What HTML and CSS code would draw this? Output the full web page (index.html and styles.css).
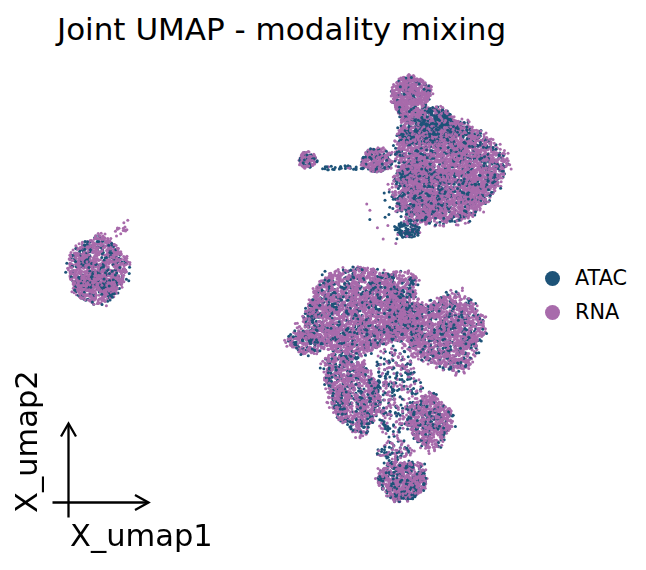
FILE: index.html
```html
<!DOCTYPE html>
<html>
<head>
<meta charset="utf-8">
<link rel="stylesheet" href="styles.css">
</head>
<body>
<div class="figure">
  <h1 class="title">Joint UMAP - modality mixing</h1>
  <div class="main">
    <div class="plot">
      <canvas id="scatter" class="scatter" width="530" height="508"></canvas>
      <svg class="axes" viewBox="0 62 530 508" width="530" height="508">
        <path class="axis" d="M68.5 517.5 V424"/>
        <path class="axis" d="M61 436.5 L68.5 423.5 L76 436.5"/>
        <path class="axis" d="M52.5 502.5 H148"/>
        <path class="axis" d="M135 495 L148.5 502.5 L135 510"/>
      </svg>
      <div class="xlabel">X_umap1</div>
      <div class="ylabel">X_umap2</div>
    </div>
    <ul class="legend">
      <li class="legend-item"><span class="dot atac"></span>ATAC</li>
      <li class="legend-item"><span class="dot rna"></span>RNA</li>
    </ul>
  </div>
</div>
<script src="script.js"></script>
</body>
</html>
```

FILE: styles.css
```css
* { box-sizing: border-box; }
html, body { margin: 0; padding: 0; background: #ffffff; }
body { font-family: "DejaVu Sans", "Liberation Sans", sans-serif; color: #000; }
.figure { width: 646px; height: 570px; overflow: hidden; display: flex; flex-direction: column; }
.title { margin: 0; height: 62px; padding: 14px 0 0 57px; font-size: 31px; line-height: 31px; font-weight: normal; white-space: nowrap; }
.main { display: flex; flex: 1; }
.plot { position: relative; width: 530px; height: 508px; flex: none; }
.scatter { display: block; width: 530px; height: 508px; }
.axes { position: absolute; left: 0; top: 0; overflow: visible; }
.axis { fill: none; stroke: #000; stroke-width: 2.3; stroke-linejoin: miter; stroke-linecap: butt; }
.xlabel { position: absolute; left: 70px; top: 459px; font-size: 30.5px; line-height: 30px; white-space: nowrap; }
.ylabel { position: absolute; left: 12px; top: 451px; font-size: 30.5px; line-height: 30px; white-space: nowrap; transform: rotate(-90deg); transform-origin: 0 0; }
.legend { list-style: none; margin: 0; padding: 199px 0 0 14.5px; display: flex; flex-direction: column; }
.legend-item { display: flex; align-items: center; gap: 15.5px; height: 34px; font-size: 20.8px; line-height: 34px; white-space: nowrap; }
.dot { width: 15px; height: 15px; border-radius: 50%; flex: none; }
.atac { background: #1d5378; }
.rna { background: #a86bab; }
```

FILE: script.js
```js
(function () {
  var cv = document.getElementById('scatter');
  var W = 530, H = 508, OY = 62;
  var dpr = window.devicePixelRatio || 1;
  cv.width = W * dpr; cv.height = H * dpr;
  var ctx = cv.getContext('2d');
  ctx.scale(dpr, dpr);
  ctx.translate(0, -OY);

  var s = 987654;
  function rnd() {
    s |= 0; s = s + 0x6D2B79F5 | 0;
    var t = Math.imul(s ^ s >>> 15, 1 | s);
    t = t + Math.imul(t ^ t >>> 7, 61 | t) ^ t;
    return ((t ^ t >>> 14) >>> 0) / 4294967296;
  }
  function gauss() {
    var u = rnd() || 1e-9, v = rnd();
    return Math.sqrt(-2 * Math.log(u)) * Math.cos(2 * Math.PI * v);
  }

  // [cx, cy, rx, ry, rot, n, atacFraction, kind]
  var C = [
    // left cluster
    [98, 266, 30, 28, 0.1, 1000, 0.24, 'e'],
    [96, 288, 22, 16, 0.0, 400, 0.2, 'e'],
    [120, 230, 5, 6, 0.5, 14, 0.1, 'g'],
    // upper right
    [448, 170, 53, 52, 0.0, 3800, 0.24, 'e'],
    [420, 192, 28, 32, 0.0, 700, 0.28, 'e'],
    [411, 98, 19, 23, 0.1, 800, 0.12, 'e'],
    [436, 125, 20, 18, 0.2, 600, 0.62, 'e'],
    [414, 132, 16, 14, 0.0, 250, 0.45, 'e'],
    [377, 160, 15, 12, 0.0, 320, 0.3, 'e'],
    [308, 160, 9, 8, 0.0, 130, 0.3, 'e'],
    [342, 168, 22, 2.5, 0.0, 30, 0.8, 'e'],
    [408, 229, 12, 9, 0.0, 120, 0.8, 'e'],
    [395, 215, 18, 18, 0.0, 30, 0.6, 'g'],
    // lower group
    [356, 312, 54, 42, -0.1, 2900, 0.22, 'e'],
    [446, 332, 39, 37, -0.15, 1600, 0.2, 'e'],
    [405, 318, 20, 30, 0.0, 450, 0.25, 'e'],
    [305, 342, 18, 12, 0.2, 230, 0.3, 'e'],
    [352, 392, 25, 42, -0.35, 1150, 0.25, 'e'],
    [396, 392, 24, 45, 0.0, 380, 0.45, 'e'],
    [430, 423, 22, 25, 0.0, 680, 0.2, 'e'],
    [430, 398, 8, 6, 0.0, 60, 0.2, 'e'],
    [402, 480, 25, 20, 0.0, 720, 0.3, 'e'],
    [407, 496, 10, 3, 0.0, 50, 0.85, 'e'],
    [395, 450, 18, 10, 0.0, 80, 0.4, 'e'],
    [400, 282, 18, 12, 0.0, 180, 0.25, 'e']
  ];

  var pts = [];
  C.forEach(function (c) {
    var cx = c[0], cy = c[1], rx = c[2], ry = c[3], rot = c[4], n = c[5], fa = c[6], kind = c[7];
    var p1 = rnd() * 6.28, p2 = rnd() * 6.28;
    var cr = Math.cos(rot), sr = Math.sin(rot);
    for (var i = 0; i < n; i++) {
      var x, y;
      if (kind === 'g') {
        x = gauss() * rx * 0.7; y = gauss() * ry * 0.7;
      } else {
        var th = rnd() * Math.PI * 2;
        var f = 1 + 0.07 * Math.sin(3 * th + p1) + 0.05 * Math.sin(5 * th + p2);
        var r = Math.sqrt(rnd()) * f * (1 + 0.06 * gauss());
        x = Math.cos(th) * r * rx; y = Math.sin(th) * r * ry;
      }
      var X = cx + x * cr - y * sr, Y = cy + x * sr + y * cr;
      pts.push([X, Y, rnd() < fa ? 1 : 0]);
    }
  });
  for (var i = pts.length - 1; i > 0; i--) {
    var j = Math.floor(rnd() * (i + 1));
    var t = pts[i]; pts[i] = pts[j]; pts[j] = t;
  }
  var cols = ['#a86bab', '#1d5378'];
  for (var k = 0; k < pts.length; k++) {
    var p = pts[k];
    ctx.fillStyle = cols[p[2]];
    ctx.beginPath();
    ctx.arc(p[0], p[1], 1.5, 0, Math.PI * 2);
    ctx.fill();
  }
})();
```
